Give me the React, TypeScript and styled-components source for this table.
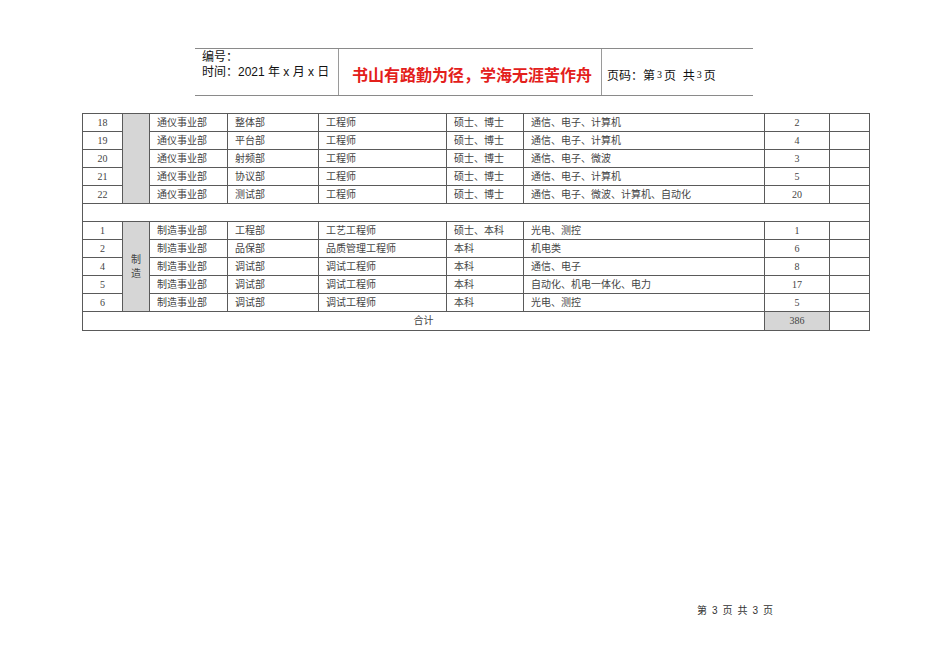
import { FC } from "react";
import styled, { createGlobalStyle } from "styled-components";

const GlobalStyle = createGlobalStyle`
  html, body {
    margin: 0;
    padding: 0;
    background: #fff;
  }
`;

const CJK_SERIF = `"Liberation Serif", "Noto Sans CJK SC", serif`;
const CJK_SANS = `"Liberation Sans", "Noto Sans CJK SC", sans-serif`;

interface Row {
  no: string;
  division: string;
  dept: string;
  title: string;
  degree: string;
  major: string;
  count: string;
}

const commRows: Row[] = [
  { no: "18", division: "通仪事业部", dept: "整体部", title: "工程师", degree: "硕士、博士", major: "通信、电子、计算机", count: "2" },
  { no: "19", division: "通仪事业部", dept: "平台部", title: "工程师", degree: "硕士、博士", major: "通信、电子、计算机", count: "4" },
  { no: "20", division: "通仪事业部", dept: "射频部", title: "工程师", degree: "硕士、博士", major: "通信、电子、微波", count: "3" },
  { no: "21", division: "通仪事业部", dept: "协议部", title: "工程师", degree: "硕士、博士", major: "通信、电子、计算机", count: "5" },
  { no: "22", division: "通仪事业部", dept: "测试部", title: "工程师", degree: "硕士、博士", major: "通信、电子、微波、计算机、自动化", count: "20" },
];

const makeRows: Row[] = [
  { no: "1", division: "制造事业部", dept: "工程部", title: "工艺工程师", degree: "硕士、本科", major: "光电、测控", count: "1" },
  { no: "2", division: "制造事业部", dept: "品保部", title: "品质管理工程师", degree: "本科", major: "机电类", count: "6" },
  { no: "4", division: "制造事业部", dept: "调试部", title: "调试工程师", degree: "本科", major: "通信、电子", count: "8" },
  { no: "5", division: "制造事业部", dept: "调试部", title: "调试工程师", degree: "本科", major: "自动化、机电一体化、电力", count: "17" },
  { no: "6", division: "制造事业部", dept: "调试部", title: "调试工程师", degree: "本科", major: "光电、测控", count: "5" },
];

const colWidths = [40, 27, 78, 91, 128, 77, 241, 65, 40];

const App: FC = () => {
  const renderGroup = (rows: Row[], label?: string) =>
    rows.map((r, i) => (
      <tr key={r.no}>
        <Cell center>{r.no}</Cell>
        {i === 0 && (
          <Cell rowSpan={rows.length} shaded center>
            {label && <Vertical>{label}</Vertical>}
          </Cell>
        )}
        <Cell>{r.division}</Cell>
        <Cell>{r.dept}</Cell>
        <Cell>{r.title}</Cell>
        <Cell>{r.degree}</Cell>
        <Cell>{r.major}</Cell>
        <Cell center>{r.count}</Cell>
        <Cell />
      </tr>
    ));

  return (
    <Page>
      <GlobalStyle />
      <Header>
        <HeaderLeft>
          <span>编号：</span>
          <span>时间：2021 年 x 月 x 日</span>
        </HeaderLeft>
        <Motto>书山有路勤为径，学海无涯苦作舟</Motto>
        <HeaderRight>
          页码：第<Small>3</Small>页&nbsp; 共<Small>3</Small>页
        </HeaderRight>
      </Header>

      <Table>
        <colgroup>
          {colWidths.map((w, i) => (
            <col key={i} style={{ width: w }} />
          ))}
        </colgroup>
        <tbody>
          {renderGroup(commRows)}
          <tr>
            <Cell colSpan={9} />
          </tr>
          {renderGroup(makeRows, "制造")}
          <TotalRow>
            <Cell colSpan={7} center>
              合计
            </Cell>
            <Cell shaded center>
              386
            </Cell>
            <Cell />
          </TotalRow>
        </tbody>
      </Table>

      <Footer>第 3 页 共 3 页</Footer>
    </Page>
  );
};

export default App;

const Page = styled.div`
  width: 950px;
  height: 672px;
  padding-top: 48px;
  box-sizing: border-box;
  overflow: hidden;
`;

const Header = styled.div`
  margin-left: 195px;
  width: 558px;
  height: 48px;
  display: grid;
  grid-template-columns: 144px 263px 151px;
  border-top: 1px solid #8a8a8a;
  border-bottom: 1px solid #8a8a8a;
  box-sizing: border-box;
  font-family: ${CJK_SANS};
  color: #111;
`;

const HeaderLeft = styled.div`
  display: flex;
  flex-direction: column;
  padding: 1px 0 0 7px;
  font-size: 12px;
  line-height: 15px;
  border-right: 1px solid #9a9a9a;
`;

const Motto = styled.div`
  display: flex;
  align-items: center;
  justify-content: center;
  padding: 4px 0 0 4px;
  font-size: 16px;
  font-weight: bold;
  color: #e3201b;
  border-right: 1px solid #9a9a9a;
`;

const HeaderRight = styled.div`
  display: flex;
  align-items: center;
  padding: 4px 0 0 5px;
  font-size: 12px;
`;

const Small = styled.span`
  font-family: "Liberation Serif", serif;
  font-size: 10px;
  margin: 0 2px;
`;

const Table = styled.table`
  margin: 17px 0 0 82px;
  width: 787px;
  table-layout: fixed;
  border-collapse: collapse;
  border: 1.5px solid #555;
  font-family: ${CJK_SERIF};
  font-size: 10px;
  color: #444;

  tr {
    height: 18px;
  }
`;

const TotalRow = styled.tr`
  && {
    height: 19px;
  }
`;

interface CellProps {
  center?: boolean;
  shaded?: boolean;
}

const Cell = styled.td<CellProps>`
  border: 1px solid #5a5a5a;
  padding: 0 0 0 ${({ center }) => (center ? "0" : "7px")};
  text-align: ${({ center }) => (center ? "center" : "left")};
  background: ${({ shaded }) => (shaded ? "#d6d6d6" : "transparent")};
  white-space: nowrap;
  overflow: hidden;
  line-height: 14px;
  vertical-align: middle;
`;

const Vertical = styled.div`
  width: 1em;
  margin: 0 auto;
  font-size: 10px;
  line-height: 14px;
  word-break: break-all;
  white-space: normal;
`;

const Footer = styled.div`
  margin: 271px 0 0 697px;
  font-family: ${CJK_SANS};
  font-size: 10px;
  color: #333;
  letter-spacing: 0.6px;
  word-spacing: 1px;
`;
